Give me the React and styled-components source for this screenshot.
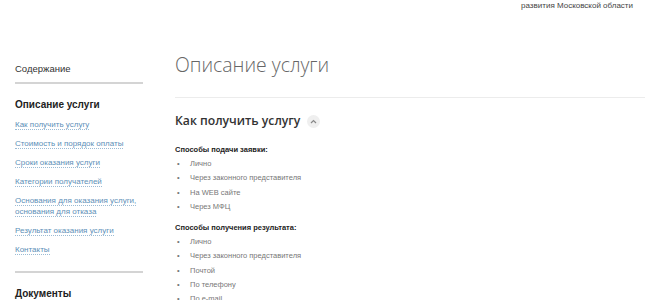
import React from 'react';
import styled, { createGlobalStyle } from 'styled-components';

const GlobalStyle = createGlobalStyle`
  html, body {
    margin: 0;
    padding: 0;
    background: #fff;
  }
  body {
    font-family: "Liberation Sans", Arial, sans-serif;
    color: #333;
    width: 660px;
    height: 300px;
    overflow: hidden;
  }
`;

const Page = styled.div`
  width: 660px;
  height: 300px;
  overflow: hidden;
`;

const TopBar = styled.div`
  display: flex;
  justify-content: flex-end;
  padding: 1px 27px 0 0;
  height: 15px;
  font-size: 8px;
  line-height: 10px;
  color: #444;
`;

const Columns = styled.div`
  display: flex;
  padding: 33px 0 0 15px;
`;

const Sidebar = styled.aside`
  width: 128px;
  flex-shrink: 0;
`;

const SideTitle = styled.div`
  font-size: 9.5px;
  line-height: 12px;
  color: #333;
  margin-top: 14px;
  padding-bottom: 7px;
  border-bottom: 2px solid #d4d4d4;
`;

const SideGroup = styled.div`
  padding: 15px 0 16px;
  border-bottom: ${(p) => (p.$last ? 'none' : '2px solid #d4d4d4')};
`;

const SideHeading = styled.div`
  font-size: 10px;
  font-weight: bold;
  line-height: 12px;
  color: #222;
  margin-bottom: 8px;
`;

const LinkList = styled.ul`
  list-style: none;
  margin: 0;
  padding: 0;
  display: flex;
  flex-direction: column;
  gap: 8px;
  li {
    font-size: 8px;
    line-height: 11px;
  }
`;

const SideLink = styled.a`
  font-size: 8px;
  line-height: 11px;
  color: #5d8fb8;
  text-decoration: none;
  border-bottom: 1px dotted #9bbbd4;
`;

const Main = styled.main`
  flex: 1;
  margin-left: 32px;
  margin-right: 15px;
  padding-top: 2px;
`;

const PageTitle = styled.h1`
  margin: 0;
  font-family: "Open Sans", sans-serif;
  font-weight: 300;
  font-size: 19.4px;
  line-height: 28px;
  color: #666;
  padding-bottom: 18px;
  border-bottom: 1px solid #ececec;
`;

const SectionHead = styled.div`
  display: flex;
  align-items: center;
  gap: 7px;
  margin-top: 13px;
`;

const SectionTitle = styled.h2`
  margin: 0;
  font-family: "Open Sans", sans-serif;
  font-weight: 600;
  font-size: 12.2px;
  line-height: 20px;
  color: #333;
`;

const Toggle = styled.span`
  width: 13px;
  height: 13px;
  border-radius: 50%;
  background: #efefef;
  display: flex;
  align-items: center;
  justify-content: center;
`;

const Label = styled.div`
  font-size: 7.5px;
  font-weight: bold;
  line-height: 10px;
  color: #222;
  margin-top: ${(p) => p.$top}px;
`;

const Bullets = styled.ul`
  margin: 2px 0 0;
  padding: 0;
  list-style: none;
  font-size: 7.5px;
  line-height: 14.3px;
  color: #777;
`;

const Item = styled.li`
  height: 14.3px;
  line-height: 14.3px;
  &::before {
    content: '•';
    display: inline-block;
    width: 13px;
    margin-left: 2px;
    line-height: 14.3px;
    vertical-align: top;
    color: #777;
  }
`;

const submit = ['Лично', 'Через законного представителя', 'На WEB сайте', 'Через МФЦ'];
const result = ['Лично', 'Через законного представителя', 'Почтой', 'По телефону', 'По e-mail'];

const links = [
  'Как получить услугу',
  'Стоимость и порядок оплаты',
  'Сроки оказания услуги',
  'Категории получателей',
  'Основания для оказания услуги, основания для отказа',
  'Результат оказания услуги',
  'Контакты',
];

const App = () => {
  return (
    <Page>
      <GlobalStyle />
      <TopBar>развития Московской области</TopBar>
      <Columns>
        <Sidebar>
          <SideTitle>Содержание</SideTitle>
          <SideGroup>
            <SideHeading>Описание услуги</SideHeading>
            <LinkList>
              {links.map((l) => (
                <li key={l}>
                  <SideLink href="#">{l}</SideLink>
                </li>
              ))}
            </LinkList>
          </SideGroup>
          <SideGroup $last>
            <SideHeading>Документы</SideHeading>
          </SideGroup>
        </Sidebar>
        <Main>
          <PageTitle>Описание услуги</PageTitle>
          <SectionHead>
            <SectionTitle>Как получить услугу</SectionTitle>
            <Toggle>
              <svg width="7" height="5" viewBox="0 0 7 5">
                <path d="M1 4 L3.5 1.5 L6 4" fill="none" stroke="#888" strokeWidth="1.2" />
              </svg>
            </Toggle>
          </SectionHead>
          <Label $top={14}>Способы подачи заявки:</Label>
          <Bullets>
            {submit.map((s) => (
              <Item key={s}>{s}</Item>
            ))}
          </Bullets>
          <Label $top={9}>Способы получения результата:</Label>
          <Bullets>
            {result.map((s, i) => (
              <Item key={i}>{s}</Item>
            ))}
          </Bullets>
        </Main>
      </Columns>
    </Page>
  );
};

export default App;
